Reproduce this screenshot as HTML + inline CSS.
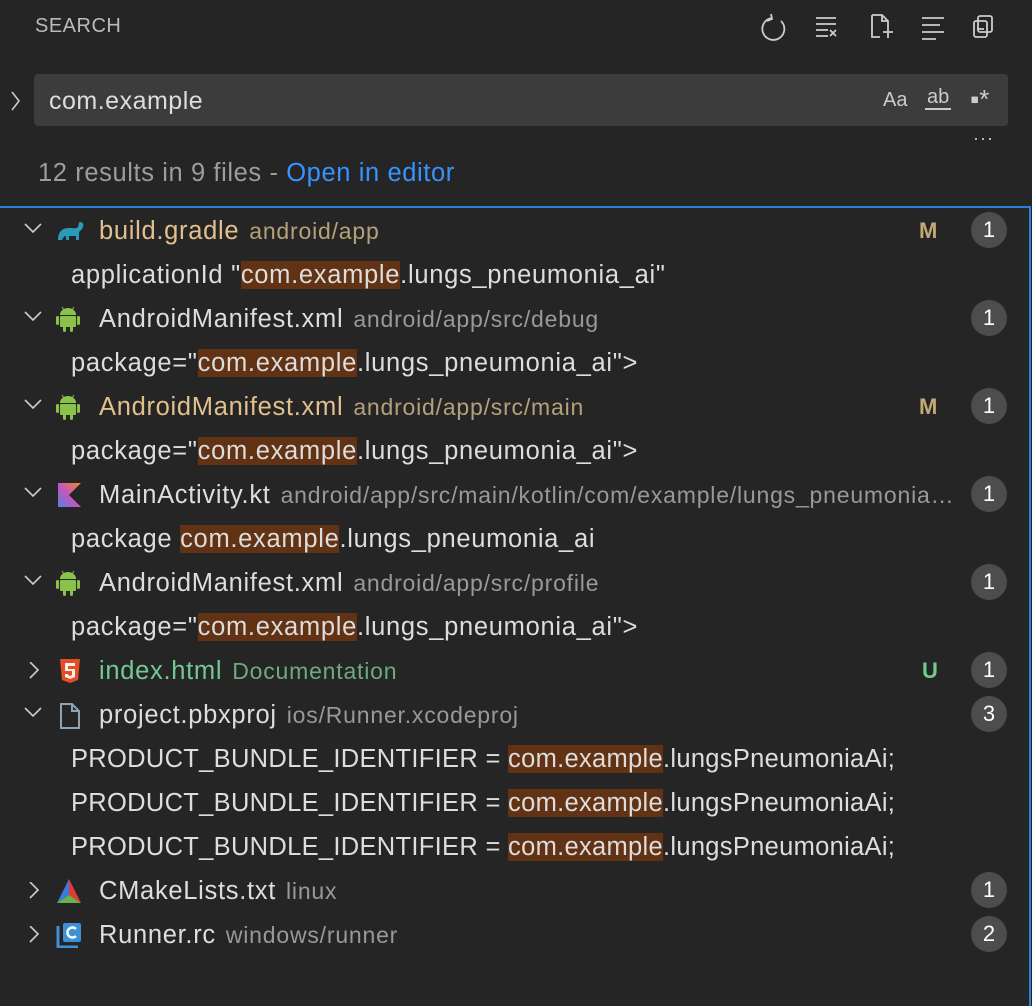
<!DOCTYPE html>
<html><head><style>
*{margin:0;padding:0;box-sizing:border-box}
body{width:1032px;height:992px;background:#252526;font-family:"Liberation Sans",sans-serif;color:#ccc;position:relative;overflow:hidden}
.a{position:absolute;white-space:nowrap}
.title{left:35px;top:15px;font-size:20px;color:#bbb;letter-spacing:.5px}
.box{left:34px;top:74px;width:974px;height:52px;background:#3c3c3c;border-radius:4px}
.q{left:49px;top:87px;font-size:25px;color:#ddd;letter-spacing:.5px}
.sum{left:38px;top:159px;font-size:25.5px;color:#9d9d9d;letter-spacing:.6px}
.sum span{color:#3794ff}
.list{left:0;top:206px;width:1031px;height:800px;border-top:2px solid #2b7fd4;border-right:2px solid #2b7fd4}
.row{position:absolute;left:0;width:1029px;height:44px;font-size:25.5px;line-height:46px;letter-spacing:.7px}
.fn{position:absolute;left:99px;color:#ddd;max-width:870px;overflow:hidden;text-overflow:ellipsis}
.fn i{font-style:normal;color:#999;font-size:23px;margin-left:10px;letter-spacing:.8px}
.m{position:absolute;left:71px;color:#ddd}
.m.u{letter-spacing:.3px}
.m b{font-weight:normal;background:#613214}
.chev{position:absolute;left:24px;top:14px}
.ic{position:absolute;left:56px;top:10px}
.badge{position:absolute;left:971px;top:4px;width:36px;height:36px;border-radius:18px;background:#4d4d4d;color:#fff;text-align:center;line-height:36px;font-size:22px;letter-spacing:0}
.st{position:absolute;left:919px;font-size:22px;font-weight:bold}
</style></head><body>
<div class="a title">SEARCH</div>
<svg class="a" style="left:760px;top:10px" width="270" height="34" fill="none" stroke="#ccc" stroke-width="1.8">
<path d="M12 8 A11 11 0 1 0 21 11 M11 4 L12 9 L7 11"/>
<path d="M56 8h20M56 14h20M56 20h12M56 26h12M70 20l6 6M76 20l-6 6"/>
<path d="M112 5h10l6 6v10M128 11h-6V5M112 5v22h8M123 22h10M128 17v11"/>
<path d="M162 8h22M162 15h18M162 22h22M162 29h14"/>
<rect x="218" y="6" width="14" height="16" rx="2"/><rect x="214" y="11" width="13" height="16" rx="2"/><path d="M217 19h7"/>
</svg>
<svg class="a" style="left:8px;top:90px" width="14" height="22" fill="none" stroke="#ccc" stroke-width="1.6"><path d="M4 2l7 9-7 9"/></svg>
<div class="a box"></div>
<div class="a q">com.example</div>
<div class="a" style="left:883px;top:89px;font-size:20px;color:#ccc">Aa</div>
<div class="a" style="left:925px;top:86px;font-size:20px;color:#ccc;border-bottom:2px solid #ccc;line-height:22px;padding:0 2px">ab</div>
<div class="a" style="left:970px;top:84px;font-size:26px;color:#ccc">▪*</div>
<div class="a" style="left:973px;top:128px;font-size:18px;color:#ccc;letter-spacing:1px">···</div>
<div class="a sum">12 results in 9 files - <span>Open in editor</span></div>
<div class="a list">
<svg width="0" height="0" style="position:absolute"><defs>
<g id="down"><path d="M1 2l8 8 8-8" fill="none" stroke="#ccc" stroke-width="1.6"/></g>
<g id="right"><path d="M3 0l8 8-8 8" fill="none" stroke="#ccc" stroke-width="1.6"/></g>
<g id="droid" fill="#8bc34a"><path d="M4 9a8 7 0 0 1 16 0z"/><rect x="4" y="10" width="16" height="11" rx="1"/><rect x="0" y="10" width="3" height="9" rx="1.5"/><rect x="21" y="10" width="3" height="9" rx="1.5"/><rect x="7" y="20" width="3" height="6" rx="1.5"/><rect x="14" y="20" width="3" height="6" rx="1.5"/><path d="M6 1l2 3M18 1l-2 3" stroke="#8bc34a" stroke-width="1"/></g>
</defs></svg>
<div class="row" style="top:0"><svg class="chev" width="20" height="14"><use href="#down"/></svg><svg class="ic" width="30" height="26"><path d="M2 22c0-8 4-12 11-12 4 0 7 1 9-1 1-2 0-4 2-5 3 0 4 3 3 5-1 3-3 4-4 5v8h-3v-4h-7v4h-3v-4c-2 0-3 2-4 4z" fill="#2a9ab8"/></svg><div class="fn" style="color:#e2c08d">build.gradle<i style="color:#b5a179">android/app</i></div><div class="st" style="color:#c5a877;top:0">M</div><div class="badge">1</div></div>
<div class="row" style="top:44px"><div class="m">applicationId "<b>com.example</b>.lungs_pneumonia_ai"</div></div>
<div class="row" style="top:88px"><svg class="chev" width="20" height="14"><use href="#down"/></svg><svg class="ic" width="26" height="28"><use href="#droid"/></svg><div class="fn">AndroidManifest.xml<i>android/app/src/debug</i></div><div class="badge">1</div></div>
<div class="row" style="top:132px"><div class="m">package="<b>com.example</b>.lungs_pneumonia_ai"&gt;</div></div>
<div class="row" style="top:176px"><svg class="chev" width="20" height="14"><use href="#down"/></svg><svg class="ic" width="26" height="28"><use href="#droid"/></svg><div class="fn" style="color:#e2c08d">AndroidManifest.xml<i style="color:#b5a179">android/app/src/main</i></div><div class="st" style="color:#c5a877">M</div><div class="badge">1</div></div>
<div class="row" style="top:220px"><div class="m">package="<b>com.example</b>.lungs_pneumonia_ai"&gt;</div></div>
<div class="row" style="top:264px"><svg class="chev" width="20" height="14"><use href="#down"/></svg><svg class="ic" width="26" height="26"><defs><linearGradient id="k" x1="0" y1="1" x2="1" y2="0"><stop offset="0" stop-color="#5a7ddf"/><stop offset=".5" stop-color="#c757bc"/><stop offset="1" stop-color="#f08a24"/></linearGradient></defs><path d="M2 1h23L13 13l12 12H2z" fill="url(#k)"/></svg><div class="fn">MainActivity.kt<i>android/app/src/main/kotlin/com/example/lungs_pneumonia…</i></div><div class="badge">1</div></div>
<div class="row" style="top:308px"><div class="m">package <b>com.example</b>.lungs_pneumonia_ai</div></div>
<div class="row" style="top:352px"><svg class="chev" width="20" height="14"><use href="#down"/></svg><svg class="ic" width="26" height="28"><use href="#droid"/></svg><div class="fn">AndroidManifest.xml<i>android/app/src/profile</i></div><div class="badge">1</div></div>
<div class="row" style="top:396px"><div class="m">package="<b>com.example</b>.lungs_pneumonia_ai"&gt;</div></div>
<div class="row" style="top:440px"><svg class="chev" style="left:27px;top:14px" width="14" height="18"><use href="#right"/></svg><svg class="ic" style="left:59px" width="22" height="26"><path d="M1 1h20l-2 21-8 3-8-3z" fill="#e44d26"/><path d="M6 5h10v3H9v3h7v8l-5 2-5-2v-3h3v1l2 1 2-1v-4H6z" fill="#fff" opacity=".9"/></svg><div class="fn" style="color:#73c991">index.html<i style="color:#6fa97f">Documentation</i></div><div class="st" style="color:#73c991;left:922px">U</div><div class="badge">1</div></div>
<div class="row" style="top:484px"><svg class="chev" width="20" height="14"><use href="#down"/></svg><svg class="ic" style="left:59px" width="22" height="28"><path d="M2 2h11l7 7v17H2zM13 2v7h7" fill="none" stroke="#8fa3b4" stroke-width="2"/></svg><div class="fn">project.pbxproj<i>ios/Runner.xcodeproj</i></div><div class="badge">3</div></div>
<div class="row" style="top:528px"><div class="m u">PRODUCT_BUNDLE_IDENTIFIER = <b>com.example</b>.lungsPneumoniaAi;</div></div>
<div class="row" style="top:572px"><div class="m u">PRODUCT_BUNDLE_IDENTIFIER = <b>com.example</b>.lungsPneumoniaAi;</div></div>
<div class="row" style="top:616px"><div class="m u">PRODUCT_BUNDLE_IDENTIFIER = <b>com.example</b>.lungsPneumoniaAi;</div></div>
<div class="row" style="top:660px"><svg class="chev" style="left:27px;top:14px" width="14" height="18"><use href="#right"/></svg><svg class="ic" width="26" height="26"><path d="M13 1L1 25l12-8z" fill="#3a7be0"/><path d="M13 1l12 24-12-8z" fill="#e53935"/><path d="M1 25l12-8 12 8z" fill="#6ab04c"/></svg><div class="fn">CMakeLists.txt<i>linux</i></div><div class="badge">1</div></div>
<div class="row" style="top:704px"><svg class="chev" style="left:27px;top:14px" width="14" height="18"><use href="#right"/></svg><svg class="ic" width="26" height="26"><path d="M2 4v21h20" fill="none" stroke="#3d8fd6" stroke-width="3"/><rect x="7" y="1" width="18" height="19" rx="2" fill="#3d8fd6"/><path d="M20 7a5 5 0 1 0 0 7" fill="none" stroke="#fff" stroke-width="2.4"/></svg><div class="fn">Runner.rc<i>windows/runner</i></div><div class="badge">2</div></div>
</div>
</body></html>
